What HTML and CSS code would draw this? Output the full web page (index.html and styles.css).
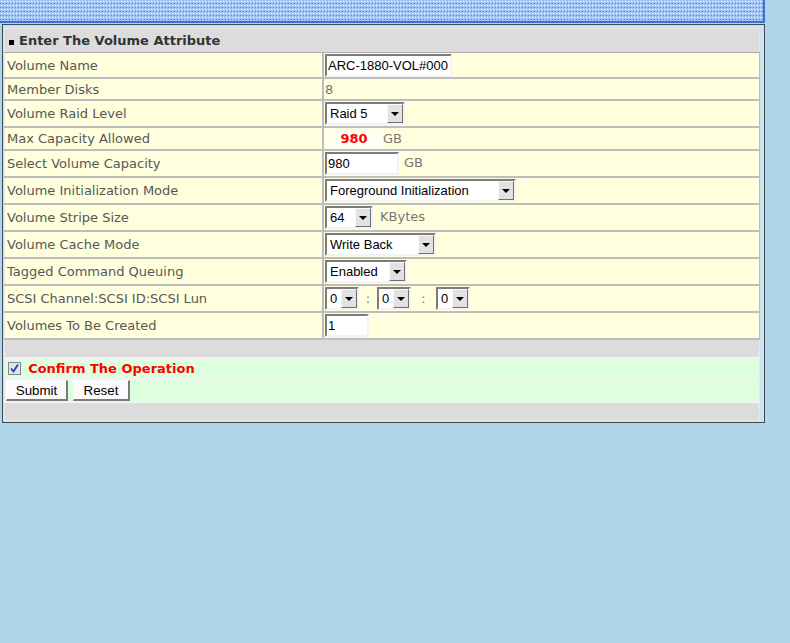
FILE: index.html
```html
<!DOCTYPE html>
<html lang="en">
<head>
  <meta charset="UTF-8">
  <title>Create Volume</title>
  <link rel="stylesheet" href="styles.css">
</head>
<body>
  <div class="topbar">
    <svg class="dots" width="763" height="21">
      <defs>
        <pattern id="dotgrid" width="3" height="4" patternUnits="userSpaceOnUse">
          <rect x="1" y="1" width="1" height="1" fill="#ffffff"/>
          <rect x="0" y="3" width="1" height="1" fill="#4f7fd6"/>
        </pattern>
      </defs>
      <rect width="763" height="21" fill="url(#dotgrid)"/>
    </svg>
  </div>

  <div class="panel">
    <table class="attr-table">
      <tr class="title-row">
        <th colspan="2"><span class="bullet"></span>Enter The Volume Attribute</th>
      </tr>
      <tr class="row-ctl first">
        <td class="label">Volume Name</td>
        <td class="value"><input type="text" class="field w-name" value="ARC-1880-VOL#000"></td>
      </tr>
      <tr class="row-text">
        <td class="label">Member Disks</td>
        <td class="value"><span class="muted">8</span></td>
      </tr>
      <tr class="row-ctl">
        <td class="label">Volume Raid Level</td>
        <td class="value">
          <span class="combo w-raid"><select><option>Raid 5</option></select><span class="arrow"></span></span>
        </td>
      </tr>
      <tr class="row-text row-max">
        <td class="label">Max Capacity Allowed</td>
        <td class="value"><input type="text" class="max-cap" value="980" readonly><span class="muted unit">GB</span></td>
      </tr>
      <tr class="row-ctl">
        <td class="label">Select Volume Capacity</td>
        <td class="value"><input type="text" class="field w-cap" value="980"><span class="muted unit-wide">GB</span></td>
      </tr>
      <tr class="row-ctl">
        <td class="label">Volume Initialization Mode</td>
        <td class="value">
          <span class="combo w-init"><select><option>Foreground Initialization</option></select><span class="arrow"></span></span>
        </td>
      </tr>
      <tr class="row-ctl">
        <td class="label">Volume Stripe Size</td>
        <td class="value">
          <span class="combo w-stripe"><select><option>64</option></select><span class="arrow"></span></span><span class="muted unit-k">KBytes</span>
        </td>
      </tr>
      <tr class="row-ctl">
        <td class="label">Volume Cache Mode</td>
        <td class="value">
          <span class="combo w-cache"><select><option>Write Back</option></select><span class="arrow"></span></span>
        </td>
      </tr>
      <tr class="row-ctl">
        <td class="label">Tagged Command Queuing</td>
        <td class="value">
          <span class="combo w-tcq"><select><option>Enabled</option></select><span class="arrow"></span></span>
        </td>
      </tr>
      <tr class="row-ctl">
        <td class="label">SCSI Channel:SCSI ID:SCSI Lun</td>
        <td class="value"><span class="combo w-scsi"><select><option>0</option></select><span class="arrow"></span></span><span class="colon">:</span><span class="combo w-scsi"><select><option>0</option></select><span class="arrow"></span></span><span class="colon">:</span><span class="combo w-scsi"><select><option>0</option></select><span class="arrow"></span></span></td>
      </tr>
      <tr class="row-ctl last">
        <td class="label">Volumes To Be Created</td>
        <td class="value"><input type="text" class="field w-count" value="1"></td>
      </tr>
      <tr class="gap-row"><td colspan="2"></td></tr>
      <tr class="confirm-row">
        <td colspan="2">
          <span class="check"><svg width="11" height="11" viewBox="0 0 11 11"><path d="M2 5.5 L4.5 8.5 L9 1.5" fill="none" stroke="#2d3fa8" stroke-width="1.8"/></svg></span>
          <span class="confirm-text">Confirm The Operation</span>
        </td>
      </tr>
      <tr class="button-row">
        <td colspan="2">
          <button class="btn btn-submit">Submit</button><button class="btn btn-reset">Reset</button>
        </td>
      </tr>
      <tr class="gap-row end"><td colspan="2"></td></tr>
    </table>
  </div>
</body>
</html>
```

FILE: styles.css
```css
body {
  margin: 0;
  padding: 0;
  background-color: #b0d7e9;
  font-family: "DejaVu Sans", Verdana, sans-serif;
  font-size: 13px;
}

.topbar {
  width: 763px;
  height: 21px;
  border-right: 2px solid #3c6fd2;
  border-bottom: 2px solid #3c6fd2;
  background-color: #a3c3f3;
}

.dots {
  display: block;
}

.panel {
  width: 758px;
  margin: 1px 0 0 2px;
  padding: 3px 2px 1px 1px;
  border: 1px solid #3e4c55;
  background-color: #cfe2ee;
}

.attr-table {
  width: 756px;
  border-collapse: collapse;
  border: 1px solid #e8e8e8;
}

.attr-table td,
.attr-table th {
  padding: 0 2px;
}

.title-row th {
  height: 23px;
  text-align: left;
  font-weight: bold;
  color: #333333;
  background-color: #dcdcdc;
  border-bottom: 1px solid #ababab;
}

.bullet {
  display: inline-block;
  width: 5px;
  height: 5px;
  margin: 0 5px 0 2px;
  background-color: #000000;
}

.label {
  width: 313px;
  color: #575757;
  background-color: #ffffdd;
  border-right: 2px solid #bdbdbd;
  border-bottom: 2px solid #bdbdbd;
}

.value {
  padding-left: 1px !important;
  background-color: #ffffdd;
  border-bottom: 2px solid #bdbdbd;
  border-right: 1px solid #bdbdbd;
  white-space: nowrap;
}

.row-ctl td {
  height: 25px;
}

.row-ctl.first td {
  height: 24px;
}

.row-text td {
  height: 20px;
}

.row-max td {
  height: 21px;
}

.muted {
  color: #777777;
}

.field,
.combo select {
  font-family: "Liberation Sans", Arial, sans-serif;
  font-size: 13px;
  color: #000000;
}

.field {
  box-sizing: border-box;
  height: 23px;
  padding: 1px 1px;
  border-top: 2px solid #7c7c7c;
  border-left: 2px solid #7c7c7c;
  border-bottom: 2px solid #f4f4f4;
  border-right: 2px solid #f4f4f4;
  background-color: #ffffff;
  vertical-align: middle;
  outline: none;
}

.w-name { width: 127px; }
.w-cap { width: 74px; }
.w-count { width: 44px; }

.max-cap {
  box-sizing: border-box;
  width: 58px;
  height: 20px;
  border: none;
  background-color: #fffff2;
  text-align: center;
  font-weight: bold;
  font-family: "DejaVu Sans", Verdana, sans-serif;
  font-size: 13px;
  color: #ff0000;
  vertical-align: middle;
}

.unit { margin-left: 0; }
.unit-wide { margin-left: 5px; }
.unit-k { margin-left: 7px; }

.combo {
  box-sizing: border-box;
  display: inline-flex;
  align-items: stretch;
  height: 23px;
  border-top: 2px solid #7c7c7c;
  border-left: 2px solid #7c7c7c;
  border-bottom: 2px solid #f4f4f4;
  border-right: 2px solid #f4f4f4;
  background-color: #ffffff;
  vertical-align: middle;
}

.combo select {
  flex: 1;
  min-width: 0;
  appearance: none;
  -webkit-appearance: none;
  border: none;
  padding: 0 0 0 3px;
  background: transparent;
  outline: none;
}

.arrow {
  box-sizing: border-box;
  width: 16px;
  display: flex;
  align-items: center;
  justify-content: center;
  background-color: #e2e2e2;
  border-top: 1px solid #f8f8f8;
  border-left: 1px solid #f8f8f8;
  border-right: 1px solid #6e6e6e;
  border-bottom: 1px solid #6e6e6e;
}

.arrow::after {
  content: "";
  border-left: 4px solid transparent;
  border-right: 4px solid transparent;
  border-top: 4px solid #000000;
  margin-top: 1px;
}

.w-raid { width: 80px; }
.w-init { width: 191px; }
.w-stripe { width: 48px; }
.w-cache { width: 111px; }
.w-tcq { width: 82px; }
.w-scsi { width: 34px; }

.colon {
  display: inline-block;
  width: 18px;
  text-align: center;
  color: #777777;
  vertical-align: middle;
}

.colon + .combo + .colon {
  width: 25px;
}

.gap-row td {
  height: 17px;
  background-color: #dcdcdc;
  border-bottom: 2px solid #f2f2f2;
}

.gap-row.end td {
  height: 17px;
  border-bottom: none;
}

.confirm-row td {
  height: 19px;
  padding-left: 3px;
  background-color: #ddffdd;
  border-bottom: 2px solid #f2f2f2;
}

.check {
  display: inline-flex;
  align-items: center;
  justify-content: center;
  box-sizing: border-box;
  width: 13px;
  height: 13px;
  margin-right: 3px;
  border: 1px solid #7d8a98;
  background-color: #dfe5ee;
  vertical-align: -1px;
}

.confirm-text {
  color: #ff0000;
  font-weight: bold;
}

.button-row td {
  height: 21px;
  padding: 0 0 0 1px;
  background-color: #ddffdd;
  border-bottom: 2px solid #f2f2f2;
}

.btn {
  box-sizing: border-box;
  height: 21px;
  padding: 0;
  font-family: "Liberation Sans", Arial, sans-serif;
  font-size: 13.33px;
  color: #000000;
  background-color: #fbfbfb;
  border-top: 1px solid #ffffff;
  border-left: 1px solid #ffffff;
  border-right: 2px solid #7a7a7a;
  border-bottom: 2px solid #7a7a7a;
  vertical-align: middle;
}

.btn-submit { width: 62px; }
.btn-reset { width: 57px; margin-left: 5px; }
```
